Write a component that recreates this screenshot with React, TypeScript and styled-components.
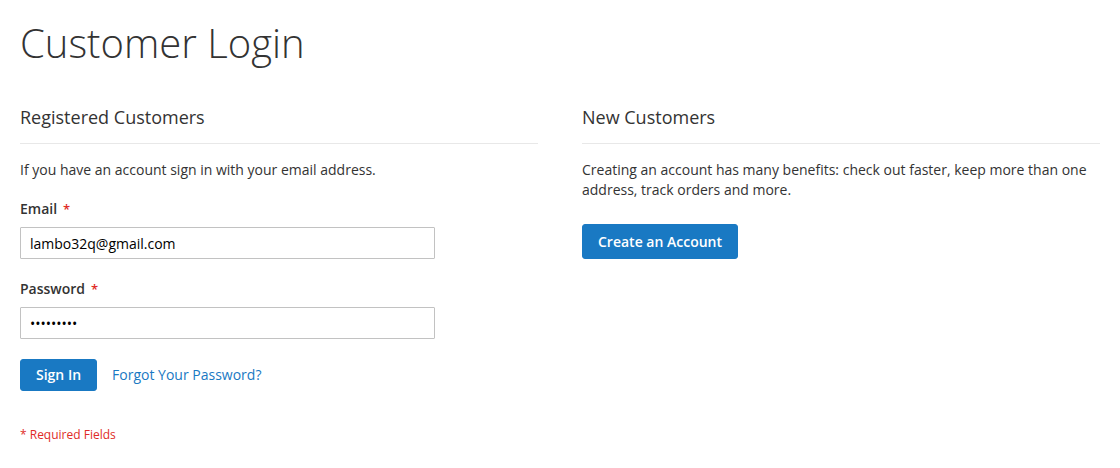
import React from "react";
import styled, { createGlobalStyle } from "styled-components";

const Global = createGlobalStyle`
  html, body { margin: 0; padding: 0; background: #fff; }
  body {
    font-family: "Open Sans", "Liberation Sans", sans-serif;
    font-size: 14px;
    line-height: 20px;
    color: #333;
  }
  * { box-sizing: border-box; }
`;

const Page = styled.main`
  padding: 21px 20px 0;
  width: 1120px;
`;

const Title = styled.h1`
  margin: 0;
  font-size: 40px;
  line-height: 44px;
  font-weight: 300;
  color: #333;
`;

const Columns = styled.div`
  display: grid;
  grid-template-columns: 518px 518px;
  column-gap: 44px;
  margin-top: 40px;
  align-items: start;
`;

const Block = styled.section`
  display: flex;
  flex-direction: column;
`;

const BlockTitle = styled.h2`
  margin: 0 0 16px;
  padding-bottom: 14px;
  border-bottom: 1px solid #e8e8e8;
  font-size: 18px;
  line-height: 24px;
  font-weight: 400;
  color: #333;
`;

const Text = styled.p`
  margin: 0;
`;

const Field = styled.div<{ $gap: number }>`
  display: flex;
  flex-direction: column;
  margin-top: ${(p) => p.$gap}px;
`;

const Label = styled.label`
  font-weight: 600;
  line-height: 20px;
  margin-bottom: 8px;
  &::after {
    content: "*";
    color: #e02b27;
    margin-left: 6px;
    font-size: 13px;
  }
`;

const Input = styled.input`
  width: 415px;
  height: 32px;
  border: 1px solid #c2c2c2;
  border-radius: 1px;
  padding: 0 9px;
  font-family: "Open Sans", "Liberation Sans", sans-serif;
  font-size: 14px;
  color: #000;
  background: #fff;
  outline: none;
`;

const Actions = styled.div<{ $top: number }>`
  display: flex;
  align-items: center;
  gap: 15px;
  margin-top: ${(p) => p.$top}px;
`;

const Button = styled.button<{ $tall?: boolean }>`
  background: #1979c3;
  border: 1px solid #1979c3;
  border-radius: 3px;
  color: #fff;
  font-family: "Open Sans", "Liberation Sans", sans-serif;
  font-size: 14px;
  font-weight: 600;
  line-height: ${(p) => (p.$tall ? 19 : 16)}px;
  padding: 7px 15px;
  cursor: pointer;
`;

const Link = styled.a`
  color: #1979c3;
  text-decoration: none;
  font-size: 14px;
`;

const Required = styled.div`
  margin-top: 35px;
  font-size: 12px;
  line-height: 17px;
  color: #e02b27;
`;

export default function App() {
  return (
    <>
      <Global />
      <Page>
        <Title>Customer Login</Title>
        <Columns>
          <Block>
            <BlockTitle>Registered Customers</BlockTitle>
            <Text>If you have an account sign in with your email address.</Text>
            <Field $gap={19}>
              <Label>Email</Label>
              <Input type="email" defaultValue="lambo32q@gmail.com" />
            </Field>
            <Field $gap={20}>
              <Label>Password</Label>
              <Input type="password" defaultValue="123456789" />
            </Field>
            <Actions $top={20}>
              <Button>Sign In</Button>
              <Link href="#">Forgot Your Password?</Link>
            </Actions>
            <Required>* Required Fields</Required>
          </Block>
          <Block>
            <BlockTitle>New Customers</BlockTitle>
            <Text>
              Creating an account has many benefits: check out faster, keep more than one
              address, track orders and more.
            </Text>
            <Actions $top={24}>
              <Button $tall>Create an Account</Button>
            </Actions>
          </Block>
        </Columns>
      </Page>
    </>
  );
}
